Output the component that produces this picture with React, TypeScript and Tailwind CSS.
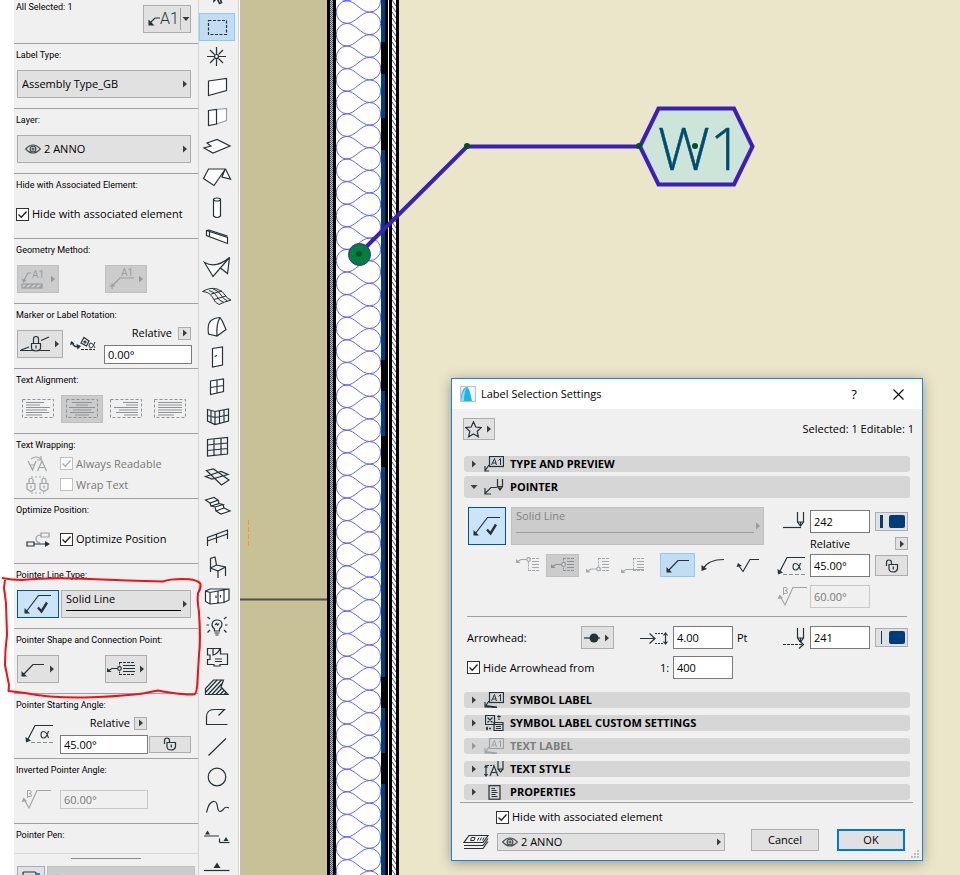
import type { ReactNode } from "react";
import clsx from "clsx";

const INK = "#263238";

type IconProps = {
  w: number;
  h: number;
  children: ReactNode;
  className?: string;
  color?: string;
};

function Icon({ w, h, children, className, color = INK }: IconProps) {
  return (
    <svg
      width={w}
      height={h}
      viewBox={`0 0 ${w} ${h}`}
      fill="none"
      stroke={color}
      strokeWidth="1.2"
      className={clsx("shrink-0", className)}
      aria-hidden="true"
    >
      {children}
    </svg>
  );
}

function Caret({ down, color = "#3c3c3c" }: { down?: boolean; color?: string }) {
  return (
    <svg width="8" height="8" viewBox="0 0 8 8" className="shrink-0" aria-hidden="true">
      <path d={down ? "M0.5 2H7.5L4 6Z" : "M2 0.5V7.5L6 4Z"} fill={color} />
    </svg>
  );
}

/* ---------- shared icons ---------- */

function EyeIcon() {
  return (
    <Icon w={16} h={10} color="#4a4f52">
      <path d="M0.7 5Q8 -3 15.3 5Q8 13 0.7 5Z" />
      <circle cx="8" cy="5" r="2.9" />
      <circle cx="8" cy="5" r="1" />
    </Icon>
  );
}

function LineCheckIcon() {
  return (
    <Icon w={30} h={22}>
      <path d="M3 19L15.500 2.500H28" />
      <path d="M1.500 15V20.500H7Z" fill={INK} stroke="none" />
      <path d="M15 14.500L18.500 18.500L24 9.500" strokeWidth="2.4" />
    </Icon>
  );
}

function BentLeaderIcon() {
  return (
    <Icon w={24} h={15}>
      <path d="M2 13L12 2.500H23" />
      <path d="M0.500 9V14.500H6Z" fill={INK} stroke="none" />
    </Icon>
  );
}

function AlphaIcon() {
  return (
    <Icon w={28} h={20}>
      <path d="M2 17L10 1.500H28" />
      <path d="M0.500 13L1 18.500L6 16.500Z" fill={INK} stroke="none" />
      <path d="M6 18.500H28" stroke="#8a8f92" strokeDasharray="4 2" strokeWidth="1" />
      <path d="M23.500 7Q21.500 14 18.500 14Q16 14 16 10.500Q16 7.500 18.500 7.500Q21.500 7.500 23.500 14" strokeWidth="1.100" />
    </Icon>
  );
}

function BetaIcon() {
  return (
    <Icon w={30} h={21} color="#a2a5a7">
      <path d="M3 10L8 19L16 1.500H30" />
      <path d="M0.500 13L2.500 8.500L6 12Z" fill="#a2a5a7" stroke="none" />
      <path d="M6.500 9V1.500H9Q11 2 10 4L8 4.500Q11 5 10.500 7Q9.500 8 7 7.500" strokeWidth="1" />
    </Icon>
  );
}

function UnlockIcon() {
  return (
    <Icon w={14} h={14}>
      <path d="M1.500 7V4Q1.500 1 4 1Q6.500 1 6.500 4V5.500" />
      <path d="M4 5.500H12.500V10Q11.500 13 8.300 13Q4.500 13 4 10Z" />
      <path d="M8.300 7.500V10.500" />
    </Icon>
  );
}

function AnchorIcon({ variant, color = INK, width = 28 }: { variant: number; color?: string; width?: number }) {
  const y = [2.5, 7.5, 12, 12.5][variant];
  return (
    <Icon w={width} h={16} color={color}>
      <path d={`M12 1.500H${width}M12 13.500H${width}`} strokeDasharray="3 1" strokeWidth="1" />
      <path d="M12.500 1.500V13.500" strokeDasharray="2 1" strokeWidth="1" />
      <path d={`M16 4.500H${width}M16 7.500H${width}M16 10.500H${width}`} strokeWidth="1" />
      <path d={`M1 ${y + 2.5}L5 ${y}H${variant === 3 ? width : 11}`} />
      <path d={`M0 ${y - 0.5}V${y + 3.5}H4.500Z`} fill={color} stroke="none" />
      {variant !== 3 && <circle cx="12.500" cy={y} r="1.800" fill="#eee" />}
    </Icon>
  );
}

/* ---------- form controls ---------- */

function Check({ label, checked, disabled }: { label: string; checked?: boolean; disabled?: boolean }) {
  return (
    <label className={clsx("flex items-center gap-[3px]", disabled && "text-[#787878]")}>
      <span className="relative h-[13px] w-[13px]">
        <input
          type="checkbox"
          defaultChecked={checked}
          disabled={disabled}
          className={clsx(
            "block h-[13px] w-[13px] appearance-none border bg-white",
            disabled ? "border-[#c0c0c0]" : "border-[#333]"
          )}
        />
        {checked && (
          <svg viewBox="0 0 13 13" className="pointer-events-none absolute inset-0" aria-hidden="true">
            <path d="M2.500 6.500L5.300 9.300L10.500 3.500" fill="none" stroke={disabled ? "#aaa" : "#222"} strokeWidth="1.300" />
          </svg>
        )}
      </span>
      <span className="whitespace-nowrap">{label}</span>
    </label>
  );
}

type FieldProps = { label: string; value: string; disabled?: boolean; className: string };

function Field({ label, value, disabled, className }: FieldProps) {
  return (
    <input
      aria-label={label}
      defaultValue={value}
      disabled={disabled}
      className={clsx(
        "border px-[3px]",
        disabled ? "border-[#c8c8c8] bg-[#f0f0f0] text-[#787878]" : "border-[#7a7a7a] bg-white",
        className
      )}
    />
  );
}

type ToolButtonProps = {
  label: string;
  children?: ReactNode;
  caret?: boolean;
  disabled?: boolean;
  active?: boolean;
  className: string;
};

function ToolButton({ label, children, caret, disabled, active, className }: ToolButtonProps) {
  return (
    <button
      aria-label={label}
      disabled={disabled}
      className={clsx(
        "flex shrink-0 items-center justify-center gap-[3px] border",
        active && "border-[#005499] bg-[#cce4f7]",
        disabled && "border-[#bfbfbf] bg-[#ccc]",
        !active && !disabled && "border-[#adadad] bg-[#e1e1e1]",
        className
      )}
    >
      {children}
      {caret && <Caret color={disabled ? "#999" : undefined} />}
    </button>
  );
}

function Dropdown({ label, value, icon, className }: { label: string; value: string; icon?: ReactNode; className: string }) {
  return (
    <div className={clsx("flex items-center gap-[3px] border border-[#adadad] bg-[#e1e1e1] pr-px pl-[4px]", className)}>
      {icon}
      <select aria-label={label} className="h-4 min-w-0 flex-1 appearance-none bg-transparent leading-4">
        <option>{value}</option>
      </select>
      <Caret />
    </div>
  );
}

function LineTypeSelect({ disabled, className }: { disabled?: boolean; className: string }) {
  return (
    <div
      className={clsx(
        "flex items-center border pr-px pl-1",
        disabled ? "border-[#bfbfbf] bg-[#ccc]" : "border-[#adadad] bg-[#e1e1e1]",
        className
      )}
    >
      <div className="flex h-full min-w-0 flex-1 flex-col">
        <select
          aria-label="Line type"
          disabled={disabled}
          className={clsx("h-4 w-full appearance-none bg-transparent leading-4 opacity-100", disabled && "text-[#838383]")}
        >
          <option>Solid Line</option>
        </select>
        <div className={clsx("border-b", disabled ? "mt-2 border-[#9c9c9c]" : "mt-[3px] border-black")} />
      </div>
      <Caret color={disabled ? "#9a9a9a" : undefined} />
    </div>
  );
}

/* ---------- info box ---------- */

function Section({ title, children }: { title: string; children?: ReactNode }) {
  return (
    <section className="h-[65px] shrink-0 border-b border-[#a0a0a0] pr-[7px] pl-[3px]">
      <h3 className="-ml-px h-5 font-[Roboto,sans-serif] text-[9px] leading-[22px] whitespace-nowrap">{title}</h3>
      <div className="flex h-10 items-center">{children}</div>
    </section>
  );
}

function AlignIcon({ lines }: { lines: number[][] }) {
  return (
    <Icon w={32} h={20} color="#8e9194">
      <rect x="0.500" y="0.500" width="31" height="18" strokeDasharray="3 2" strokeWidth="1" />
      {lines.map(([a, b], i) => (
        <path key={i} d={`M${a} ${3.5 + i * 2.5}H${b}`} strokeWidth="1" />
      ))}
    </Icon>
  );
}

const ALIGNMENTS = [
  { name: "Left", lines: [[4, 22], [4, 18], [4, 28], [4, 25], [4, 27], [4, 20]] },
  { name: "Center", lines: [[6, 26], [10, 22], [3, 29], [7, 25], [4, 28], [9, 23]] },
  { name: "Right", lines: [[13, 28], [16, 28], [4, 28], [9, 28], [6, 28], [14, 28]] },
  { name: "Justify", lines: [[4, 28], [4, 28], [4, 28], [4, 28], [4, 28], [4, 20]] },
];

function InfoBox() {
  return (
    <aside className="ml-[14px] flex w-[184px] shrink-0 flex-col bg-[#f0f0f0]">
      <div className="flex h-[44px] shrink-0 justify-between border-b border-[#a0a0a0] pr-[7px] pl-[2px]">
        <span className="font-[Roboto,sans-serif] text-[9px] leading-[14px]">All Selected: 1</span>
        <button aria-label="Label tool" className="mt-[5px] flex h-7 w-12 items-center border border-[#adadad] bg-[#e1e1e1] pl-[4px]">
          <Icon w={12} h={13}>
            <path d="M2 10L7 5H12" />
            <path d="M0.500 6.500V12.500H6.500Z" fill={INK} stroke="none" />
          </Icon>
          <span className="font-[Roboto] text-[16px] leading-none font-light text-[#263238]">A1</span>
          <span className="mx-px h-[22px] border-l border-[#a0a0a0]" />
          <Caret down />
        </button>
      </div>

      <Section title="Label Type:">
        <Dropdown label="Label type" value="Assembly Type_GB" className="h-7 w-[174px]" />
      </Section>
      <Section title="Layer:">
        <Dropdown label="Layer" value="2 ANNO" icon={<span className="ml-[3px]"><EyeIcon /></span>} className="h-7 w-[174px]" />
      </Section>
      <Section title="Hide with Associated Element:">
        <div className="-ml-px">
          <Check label="Hide with associated element" checked />
        </div>
      </Section>

      <Section title="Geometry Method:">
        <ToolButton label="Attach to element" disabled caret className="h-7 w-[42px]">
          <Icon w={26} h={22} color="#999c9e">
            <path d="M4 12L8 5H11" />
            <path d="M1.500 11L6.500 12L3.500 15Z" fill="#999c9e" stroke="none" />
            <text x="12" y="10" fontSize="10" fontFamily="Roboto" fill="#999c9e" stroke="none">A1</text>
            <rect x="2" y="16" width="20" height="4" />
            <path d="M4 20L8 16M9 20L13 16M14 20L18 16M19 20L22 17" />
          </Icon>
        </ToolButton>
        <ToolButton label="Independent label" disabled caret className="ml-[46px] h-7 w-[42px]">
          <Icon w={26} h={22} color="#999c9e">
            <path d="M4 18L12 10H26M1.500 18H7M4 15.500V21" />
            <text x="13" y="8" fontSize="10" fontFamily="Roboto" fill="#999c9e" stroke="none">A1</text>
          </Icon>
        </ToolButton>
      </Section>

      <Section title="Marker or Label Rotation:">
        <ToolButton label="Rotation lock" caret className="h-7 w-[46px]">
          <Icon w={30} h={18}>
            <path d="M0 15.500H30M1 15L9 12M21 5.500L29 2" />
            <path d="M11.500 8.500H20.500V13Q20.500 15.500 16 16Q11.500 15.500 11.500 13Z" fill="#e1e1e1" />
            <path d="M13.500 8.500V4Q13.500 1.500 16 1.500Q18.500 1.500 18.500 4V8.500M16 10.500V13.500" />
          </Icon>
        </ToolButton>
        <Icon w={26} h={16} className="ml-[7px]">
          <path d="M2 6Q4 12 9 10.500" strokeWidth="1.300" />
          <path d="M0 9L1 5L4.500 7.500ZM6.500 8L11 10L7.500 13.500Z" fill={INK} stroke="none" />
          <path d="M14 1.500L19 5L16.500 10L11 7Z" />
          <path d="M11 13.500H25" strokeWidth="1" strokeDasharray="3 1" />
          <circle cx="15" cy="6" r="1" />
          <path d="M25 6Q23 12 21 12Q19 12 19 9.500Q19 7 21 7Q23 7 25 12" strokeWidth="1" />
        </Icon>
        <div className="-mr-px ml-auto flex w-[88px] flex-col gap-[5px] pt-[2px]">
          <div className="flex h-[13px] items-center justify-end gap-[6px] pr-px">
            <span>Relative</span>
            <ToolButton label="Relative rotation" caret className="h-[13px] w-[13px]" />
          </div>
          <Field label="Rotation angle" value="0.00°" className="h-[19px] w-full" />
        </div>
      </Section>

      <Section title="Text Alignment:">
        {ALIGNMENTS.map(({ name, lines }, i) => (
          <button
            key={name}
            disabled
            aria-label={`${name} align`}
            className={clsx(
              "mr-[2px] flex h-7 w-[42px] shrink-0 items-center justify-center border",
              i === 1 ? "border-[#bfbfbf] bg-[#ccc]" : "border-transparent"
            )}
          >
            <AlignIcon lines={lines} />
          </button>
        ))}
      </Section>

      <Section title="Text Wrapping:">
        <div className="ml-[9px] flex flex-col gap-[3px]">
          <div className="flex h-[18px] items-center gap-[11px]">
            <Icon w={23} h={16} color="#a0a3a5">
              <path d="M2 5L6.500 14L10 5M4 9H8.500M11.500 15L16 5L20.500 15M13 11.500H19M5 3Q10 -1 15 3M15 0V4H11" />
            </Icon>
            <Check label="Always Readable" checked disabled />
          </div>
          <div className="flex h-[18px] items-center gap-[11px]">
            <Icon w={23} h={18} color="#a0a3a5">
              <path d="M1 7.500H9V13L5 15.500L1 13ZM3 7.500V3.500Q5 1 7 3.500V7.500M5 9.500V12.500M14 7.500H22V13L18 15.500L14 13ZM16 7.500V3.500Q18 1 20 3.500V7.500M18 9.500V12.500" />
              <path d="M5 1H18M5 17H18" strokeDasharray="2 2" />
            </Icon>
            <Check label="Wrap Text" disabled />
          </div>
        </div>
      </Section>

      <Section title="Optimize Position:">
        <div className="ml-[9px] flex items-center gap-[10px]">
          <Icon w={24} h={15}>
            <path d="M15 1H23V5H15ZM15 3Q10 3 10 7Q10 10 14 11" stroke="#9a9da0" />
            <path d="M1 10H8V14H1ZM8 12H20" />
            <path d="M19 9L24 12L19 15Z" fill={INK} stroke="none" />
          </Icon>
          <Check label="Optimize Position" checked />
        </div>
      </Section>

      <Section title="Pointer Line Type:">
        <ToolButton label="Show pointer" active className="h-7 w-[42px]">
          <LineCheckIcon />
        </ToolButton>
        <LineTypeSelect className="ml-[2px] h-7 w-[130px]" />
      </Section>

      <Section title="Pointer Shape and Connection Point:">
        <ToolButton label="Pointer shape" caret className="h-7 w-[42px]">
          <BentLeaderIcon />
        </ToolButton>
        <ToolButton label="Connection point" caret className="ml-[46px] h-7 w-[42px]">
          <AnchorIcon variant={1} />
        </ToolButton>
      </Section>

      <Section title="Pointer Starting Angle:">
        <div className="ml-[8px]">
          <AlphaIcon />
        </div>
        <div className="ml-auto flex w-[131px] flex-col gap-[5px] pt-[2px]">
          <div className="flex h-[13px] w-[87px] items-center justify-end gap-[4px]">
            <span>Relative</span>
            <ToolButton label="Relative starting angle" caret className="h-[13px] w-[13px]" />
          </div>
          <div className="flex items-center gap-px">
            <Field label="Pointer starting angle" value="45.00°" className="h-[19px] w-[88px]" />
            <ToolButton label="Unlock angle" className="h-[17px] w-[42px]">
              <UnlockIcon />
            </ToolButton>
          </div>
        </div>
      </Section>

      <Section title="Inverted Pointer Angle:">
        <div className="ml-[4px]">
          <BetaIcon />
        </div>
        <Field label="Inverted pointer angle" value="60.00°" disabled className="ml-[9px] h-[19px] w-[88px]" />
      </Section>

      <div className="h-[30px] shrink-0 border-b border-[#d9d9d9] pl-[2px] font-[Roboto,sans-serif] text-[9px] leading-[22px]">
        Pointer Pen:
      </div>
      <div className="mx-auto mt-1 w-[70px] shrink-0 border-b border-[#8a8a8a]" />
      <div className="mt-[7px] flex shrink-0 gap-[2px] pr-[3px] pl-[3px]">
        <ToolButton label="Pen settings" className="h-7 w-7">
          <Icon w={18} h={18}>
            <rect x="1" y="1" width="13" height="16" rx="1" />
            <path d="M3 4.500H12" />
            <path d="M14 3H18" stroke="#2b7de1" strokeWidth="2" />
          </Icon>
        </ToolButton>
        <button aria-label="Pen" disabled className="flex h-7 flex-1 items-start border border-[#bfbfbf] bg-[#ccc] pt-[7px] pl-[5px]">
          <Icon w={10} h={10} color="#8fa9dc">
            <circle cx="5" cy="5" r="4" fill="#b9c9ea" />
          </Icon>
        </button>
      </div>
    </aside>
  );
}

/* ---------- toolbox ---------- */

const TOOLS: { name: string; art: ReactNode }[] = [
  {
    name: "Arrow",
    art: <path d="M12 6V19L15 16L17.500 21.500L19.500 20.500L17.500 15.500H21Z" strokeWidth="1.600" />,
  },
  { name: "Marquee", art: <rect x="6.500" y="8.500" width="18" height="14" strokeDasharray="3 1.500" /> },
  {
    name: "Hotspot",
    art: (
      <>
        <path d="M14.500 5V12M14.500 17V24M5 14.500H12M17 14.500H24M8 8L12.500 12.500M16.500 16.500L21 21M21 8L16.500 12.500M12.500 16.500L8 21" />
        <circle cx="14.500" cy="14.500" r="2" />
      </>
    ),
  },
  { name: "Wall", art: <path d="M6.500 9L24.500 6.500V18.500L6.500 23.500Z" fill="#fff" /> },
  {
    name: "Curtain Panel",
    art: (
      <>
        <path d="M14.500 7.500L24.500 6.500V18.500L14.500 22" stroke="#9a9da0" fill="#fff" />
        <path d="M6.500 8.500L14.500 7.500V22L6.500 23.500Z" fill="#fff" />
      </>
    ),
  },
  { name: "Slab", art: <path d="M5 11L15 7.500L28 14L11 21L2 16L9 14Z" fill="#fff" /> },
  { name: "Roof", art: <path d="M6.500 7H23.500L28.500 17L20 15L23 7.500L12 23.500L1.500 16.500Z" fill="#fff" /> },
  {
    name: "Column",
    art: (
      <>
        <path d="M11.500 7.500V24Q15 27 18.500 24V7.500" fill="#fff" />
        <ellipse cx="15" cy="7.500" rx="3.500" ry="1.500" />
      </>
    ),
  },
  { name: "Beam", art: <path d="M4.500 8.500L25.500 15.500V21.500L4.500 13.500ZM4.500 8.500L7 8L25.500 14M7.500 9.500V14" fill="#fff" /> },
  { name: "Mesh", art: <path d="M2.500 10.500Q14 17 27.500 5.500L11 24.500ZM27.500 5.500L25.500 21.500L18.500 16" fill="#fff" /> },
  {
    name: "Shell",
    art: (
      <path
        d="M0.500 9.500Q8 5 15 7Q21 9 23 13Q25 17 29 18Q22 20 17 22.500Q13 21 11 16Q8 10 0.500 9.500ZM7 8.500Q13 10 15 14.500Q17 19 22 20.500M11 7Q17 9 19 13Q21 17 25.500 19M9 12L20 9M12 17.500L24 14"
        strokeWidth="1"
      />
    ),
  },
  { name: "Morph", art: <path d="M6.500 22Q5 12 9 8.500Q13 5.500 18 5.500L20.500 9.500L24 17.500L15 24ZM18 5.500Q14 12 15 24" fill="#fff" /> },
  { name: "Door", art: <path d="M10.500 6.500L20.500 5V23L10.500 25ZM12.500 14.500L15 13.500" fill="#fff" /> },
  { name: "Window", art: <path d="M8.500 9L21.500 7V19.500L8.500 22.500ZM15 8V21M8.500 15.500L21.500 13.500" fill="#fff" /> },
  {
    name: "Curtain Wall",
    art: <path d="M5.500 7.500L13 9.500L26.500 7V19L13 22.500L5.500 19ZM13 9.500V22.500M9 8.500V20.500M17.500 8.500V21M22 8V20M5.500 13.500L13 15.500L26.500 13" />,
  },
  {
    name: "Skylight",
    art: <path d="M5.500 7.500L25.500 5.500V22L5.500 24ZM12 7V23.500M19 6V22.500M5.500 13L25.500 11M5.500 18.500L25.500 16.500" />,
  },
  { name: "Ramp", art: <path d="M4.500 8.500L11.500 7L27 18L19.500 23ZM3.500 14.500L19 9.500L26 12.500L10 17Z" /> },
  {
    name: "Stair",
    art: (
      <path
        d="M3.500 8L12 5.500L16 8L8 11L3.500 8ZM8 11L9 14L17 11.500L16 8M9 14L13 15L21 12.500L17 11.500M13 15L14 19L22 16L21 12.500M14 19L19 22L28 19L22 16"
        fill="#fff"
      />
    ),
  },
  { name: "Railing", art: <path d="M5.500 24V15.500L25.500 8V17M5.500 19L25.500 12M14.500 12V21" /> },
  { name: "Object", art: <path d="M8.500 20V6.500L13 5L14.500 13L23.500 15V24M8.500 16L14.500 13M8.500 16L16 19L23.500 15M16 19V26" /> },
  {
    name: "Zone Cabinet",
    art: <path d="M3.500 9L8 7H27V18L22 20.500L8 22L3.500 19.500ZM3.500 9L8 10.500L27 7M8 10.500V22M16 9.500V21M22 8.500V20.500M14 13.500V16M18.500 13V15.500" fill="#fff" />,
  },
  {
    name: "Lamp",
    art: (
      <>
        <path d="M12.500 19V17Q9.500 14.500 10 12Q11 8 15 8Q19.500 8 20 12Q20 15 17.500 17V19ZM12.500 21H17.500M13.500 23H16.500M13 13L14.500 11.500L15.500 13L17 11.500" />
        <path d="M8 7L5.500 5M22 7L24.500 5M7 13H4.500M23 13H25.500M8 18L5.500 20.500M22 18L24.500 20.500" />
      </>
    ),
  },
  {
    name: "Zone",
    art: <path d="M5.500 6.500H18.500V12H25.500V22.500H18V24H12V22.500H5.500V17.500H8V13H5.500ZM11 6.500V13Q16 12 18 6.500M13 17H20M13 19.500H20" />,
  },
  {
    name: "Fill",
    art: (
      <>
        <path d="M11.500 8H21.500L19 15L26 22.500H3.500V16.500Z" />
        <path d="M4 20L15 8M6 22.500L19.500 8M10 22.500L20 11.500M14 22.500L20 16M18 22.500L22 18.500M22 22.500L24 20.500" strokeWidth="1.300" />
      </>
    ),
  },
  { name: "Polyline", art: <path d="M25.500 22.500H4.500V14.500Q5 7.500 12 7.500H22.500L16.500 13.500" /> },
  { name: "Line", art: <path d="M6.500 23.500L24 6.500" /> },
  { name: "Circle", art: <circle cx="15" cy="15" r="8.800" /> },
  { name: "Spline", art: <path d="M4.500 20.500C6 14 9 9 12.500 9.500C17 10 14 19 18 19.500C22 20 21 13 27 16" /> },
  {
    name: "Section",
    art: (
      <>
        <path d="M2 14H17.500V20.500" strokeDasharray="15 3 4" />
        <path d="M17.500 20.500H27.500" />
        <path d="M3 12.500L5.500 8.500L8 12.500ZM21.500 19L24 15L26.500 19Z" fill={INK} stroke="none" />
      </>
    ),
  },
  {
    name: "Elevation",
    art: (
      <>
        <path d="M2 18.500H27.500" />
        <path d="M11.500 16L15 10.500L18.500 16Z" fill={INK} stroke="none" />
      </>
    ),
  },
];

function Toolbox() {
  return (
    <nav className="flex w-[41px] shrink-0 flex-col border-x border-[#d4d4d4] bg-[#f0f0f0] pr-[3px]">
      <div className="-mt-[18px] flex flex-col">
        {TOOLS.map(({ name, art }) => {
          const active = name === "Marquee";
          return (
            <button
              key={name}
              aria-label={name}
              className={clsx(
                "flex shrink-0 items-center justify-center border",
                active ? "my-px h-7 border-[#90c8f6] bg-[#c2ddf2]" : "h-[30px] border-transparent"
              )}
            >
              <Icon w={30} h={30}>{art}</Icon>
            </button>
          );
        })}
      </div>
    </nav>
  );
}

/* ---------- drawing ---------- */

const PERIOD = 22.6;
const INSULATION = Array.from({ length: 41 }, (_, i) => {
  const y = 23.4 + (i - 2) * PERIOD;
  const half = PERIOD / 2;
  return `M347 ${y}C355 ${y} 361 ${y - half} 369.500 ${y - half}A11.200 ${half} 0 0 1 369.500 ${y + half}C361 ${y + half} 355 ${y} 347 ${y}A10.700 ${half} 0 0 0 347 ${y + PERIOD}`;
}).join("");

const STUDS = [[42, 32], [118, 32], [360, 31], [436, 31], [677, 31], [753, 31]];

function Drawing() {
  return (
    <svg width="720" height="875" viewBox="240 0 720 875" className="absolute top-0 left-0" aria-label="Wall section with label">
      <defs>
        <pattern id="gypsum" width="2" height="2" patternUnits="userSpaceOnUse">
          <rect width="2" height="2" fill="#b4b4c8" />
          <rect width="1" height="1" fill="#55556e" />
          <rect x="1" y="1" width="1" height="1" fill="#55556e" />
        </pattern>
        <pattern id="cladding" x="392" width="4" height="6" patternUnits="userSpaceOnUse">
          <rect width="4" height="6" fill="#fff" />
          <path d="M0 0L4 6" stroke="#50506e" strokeWidth="1" />
        </pattern>
      </defs>
      <rect x="240" y="0" width="87" height="875" fill="#c8c197" />
      <path d="M240 599.500H327" stroke="#4f4f4c" strokeWidth="2" />
      <path d="M248.500 520V546" stroke="#f79432" strokeDasharray="5 2" />

      <rect x="327" y="0" width="72" height="875" fill="#000" />
      <rect x="330" y="0" width="3" height="875" fill="url(#gypsum)" />
      <rect x="336" y="0" width="45" height="875" fill="#fff" />
      <path d={INSULATION} fill="none" stroke="#6060ff" strokeWidth="1" />
      <rect x="381" y="0" width="4" height="875" fill="#003f7d" />
      {STUDS.map(([y, h]) => (
        <rect key={y} x="381" y={y} width="4" height={h} fill="#080800" />
      ))}
      <rect x="388" y="0" width="1" height="875" fill="#fff" />
      <rect x="392" y="0" width="4" height="875" fill="url(#cladding)" />

      <path d="M359 254L467 146.500H640" fill="none" stroke="#3b1fb8" strokeWidth="4" />
      <path d="M640 146.500L658.500 108.500H734L752.500 146.500L734 184.500H658.500Z" fill="#cde5d8" stroke="#3b1fb8" strokeWidth="4" />
      <text x="658" y="170" fontFamily="Open Sans, sans-serif" fontWeight="300" fontSize="58" fill="#004c70" stroke="#004c70" strokeWidth="0.500">
        W1
      </text>
      <circle cx="467" cy="146" r="3" fill="#00502a" />
      <circle cx="639" cy="146" r="3" fill="#00502a" />
      <circle cx="695" cy="146" r="3" fill="#00502a" />
      <circle cx="359.500" cy="254.500" r="11" fill="#008040" stroke="#4a2a8c" />
      <circle cx="359" cy="254" r="3" fill="#00502a" />
    </svg>
  );
}

/* ---------- dialog ---------- */

function PanelHeader({ title, icon, open, disabled }: { title: string; icon: ReactNode; open?: boolean; disabled?: boolean }) {
  return (
    <button
      disabled={disabled}
      aria-expanded={!!open}
      className={clsx(
        "flex w-full items-center rounded-[3px] bg-[#d6d6d6] pl-[6px] text-left leading-4 font-bold",
        open ? "h-[22px]" : "h-4",
        disabled && "text-[#7d7d7d]"
      )}
    >
      <Caret down={open} color={disabled ? "#999" : undefined} />
      <span className="ml-[6px] flex w-5 justify-center">{icon}</span>
      <span className="ml-[6px]">{title}</span>
    </button>
  );
}

function LabelIcon({ symbol, color = INK }: { symbol?: boolean; color?: string }) {
  return (
    <Icon w={20} h={16} color={color}>
      <rect x="5.500" y="0.500" width="14" height="10" />
      <path d="M7.500 9L10.500 2.500L12.500 9M8.500 7H12M14.500 4.500L16.500 2.500V9" strokeWidth="1" />
      <path d="M5 9L1.500 14M1 10V15H5" />
      {symbol && <path d="M2 14L13 15.500" strokeWidth="2" />}
    </Icon>
  );
}

function PenTip({ arrow }: { arrow?: boolean }) {
  return (
    <Icon w={22} h={22}>
      <path d="M14.500 1V11L17.500 15L20.500 11V1M15 11H20M17.500 11V15" />
      {arrow ? <path d="M0 17.500H20" strokeDasharray="3 1" /> : <path d="M0 16.500H18" />}
      {arrow && <path d="M16 13.500L20.500 17.500L16 21.500" />}
    </Icon>
  );
}

function PenSwatch({ label, thin }: { label: string; thin?: boolean }) {
  return (
    <ToolButton label={label} className="h-[19px] w-[33px]">
      <Icon w={26} h={13}>
        <rect x={thin ? 2 : 1} y="0" width={thin ? 1 : 3} height="13" fill="#003c78" stroke="none" />
        <rect x="10" y="0" width="16" height="13" rx="2" fill="#003c78" stroke="none" />
      </Icon>
    </ToolButton>
  );
}

function LabelDialog() {
  return (
    <div
      role="dialog"
      aria-label="Label Selection Settings"
      className="absolute top-[378px] left-[211px] w-[472px] border border-[#1883d7] bg-[#f0f0f0] shadow-[0_2px_12px_rgba(0,0,0,0.35)]"
    >
      <header className="flex h-[30px] items-center bg-white pr-4 pl-2">
        <Icon w={16} h={16}>
          <rect x="0.500" y="0.500" width="15" height="15" rx="1" fill="#f2f7f9" stroke="#b9c4ca" />
          <path d="M1 15V10Q3 1 7 1Q9 1 12 15Z" fill="#19b5e8" stroke="none" />
          <path d="M1 15Q2 5 7 1Q4 6 4 15Z" fill="#8fdcf2" stroke="none" />
        </Icon>
        <h2 className="ml-[5px] flex-1">Label Selection Settings</h2>
        <button aria-label="Help" className="w-6 text-center text-[13px]">
          ?
        </button>
        <button aria-label="Close" className="ml-6 flex w-[16px] justify-center">
          <Icon w={11} h={11} color="#111">
            <path d="M0.500 0.500L10.500 10.500M10.500 0.500L0.500 10.500" />
          </Icon>
        </button>
      </header>

      <div className="px-3">
        <div className="-mx-px mt-[9px] flex items-center justify-between">
          <ToolButton label="Favorites" caret className="h-[22px] w-8">
            <Icon w={17} h={17}>
              <path d="M8.500 0.800L10.800 6L16.300 6.600L12.200 10.300L13.400 15.800L8.500 13L3.600 15.800L4.800 10.300L0.700 6.600L6.200 6Z" />
            </Icon>
          </ToolButton>
          <span className="-mr-[3px]">Selected: 1 Editable: 1</span>
        </div>

        <div className="mt-4 flex flex-col gap-1">
          <PanelHeader title="TYPE AND PREVIEW" icon={<LabelIcon />} />
          <PanelHeader
            title="POINTER"
            open
            icon={
              <Icon w={20} h={16}>
                <path d="M1 14.500L7 8.500H13M1 9V15H7" />
                <path d="M13.500 0V7.500L16 11L18.500 7.500V0M13.500 7.500H18.500M16 8V11" />
              </Icon>
            }
          />
        </div>

        <div className="flex gap-[13px] pt-[9px] pr-[2px] pl-1">
          <div className="flex flex-1 flex-col gap-2">
            <div className="flex gap-[5px]">
              <ToolButton label="Show pointer" active className="h-[38px] w-[38px]">
                <LineCheckIcon />
              </ToolButton>
              <LineTypeSelect disabled className="h-[38px] flex-1" />
            </div>
            <div className="ml-[48px] flex h-6 items-center">
              <button disabled aria-label="Connect top">
                <AnchorIcon variant={0} color="#a5a8aa" width={23} />
              </button>
              <ToolButton label="Connect middle" disabled className="ml-[7px] h-[23px] w-[33px]">
                <AnchorIcon variant={1} color="#8e9193" width={23} />
              </ToolButton>
              <button disabled aria-label="Connect bottom" className="ml-[7px]">
                <AnchorIcon variant={2} color="#a5a8aa" width={23} />
              </button>
              <button disabled aria-label="Connect underlined" className="ml-[12px]">
                <AnchorIcon variant={3} color="#a5a8aa" width={23} />
              </button>
              <button aria-label="Straight pointer" className="ml-[16px] flex h-6 w-[35px] items-center justify-center border border-[#90c8f6] bg-[#c2ddf2]">
                <BentLeaderIcon />
              </button>
              <button aria-label="Curved pointer" className="ml-[6px]">
                <Icon w={23} h={14}>
                  <path d="M2 11Q7 1.500 23 1.500" />
                  <path d="M0.500 7V13L6 11Z" fill={INK} stroke="none" />
                </Icon>
              </button>
              <button aria-label="Inverted pointer" className="ml-[12px]">
                <Icon w={23} h={16}>
                  <path d="M3 9L7 14.500L14 2.500H23" />
                  <path d="M0.500 10L2 6L6 9Z" fill={INK} stroke="none" />
                </Icon>
              </button>
            </div>
          </div>

          <div className="flex w-[131px] flex-col pt-[3px]">
            <div className="flex items-center justify-end gap-[5px]">
              <PenTip />
              <Field label="Pointer pen" value="242" className="h-[23px] w-[60px]" />
              <PenSwatch label="Pointer pen color" />
            </div>
            <div className="mt-1 flex h-[13px] items-center justify-between pl-[33px]">
              <span>Relative</span>
              <ToolButton label="Relative angle" caret className="h-[13px] w-[13px]" />
            </div>
            <div className="mt-1 flex items-center justify-end gap-[5px]">
              <AlphaIcon />
              <Field label="Starting angle" value="45.00°" className="h-[23px] w-[60px]" />
              <ToolButton label="Unlock angle" className="h-[21px] w-[33px]">
                <UnlockIcon />
              </ToolButton>
            </div>
            <div className="mt-2 flex items-center gap-[3px]">
              <BetaIcon />
              <Field label="Inverted angle" value="60.00°" disabled className="h-[23px] w-[60px]" />
            </div>
          </div>
        </div>

        <div className="mx-[3px] mt-2 border-t border-[#a0a0a0] pt-[9px]">
          <div className="-mr-px flex items-center">
            <span className="w-[114px]">Arrowhead:</span>
            <ToolButton label="Arrowhead shape" caret className="h-[23px] w-[33px]">
              <Icon w={16} h={12}>
                <path d="M0 6H16" />
                <circle cx="10" cy="6" r="4.500" fill={INK} stroke="none" />
              </Icon>
            </ToolButton>
            <Icon w={28} h={14} className="ml-[26px]">
              <path d="M0 7.500H15M9.500 2.500L15 7.500L9.500 12.500" />
              <path d="M15 2.500H23M15 12.500H23" strokeDasharray="2 1" />
              <path d="M25.500 3V12M23.500 4.500L25.500 2L27.500 4.500M23.500 10.500L25.500 13L27.500 10.500" />
            </Icon>
            <Field label="Arrowhead size" value="4.00" className="ml-[5px] h-[23px] w-[60px]" />
            <span className="ml-[4px]">Pt</span>
            <div className="ml-auto flex items-center gap-[5px]">
              <PenTip arrow />
              <Field label="Arrowhead pen" value="241" className="h-[23px] w-[60px]" />
              <PenSwatch label="Arrowhead pen color" thin />
            </div>
          </div>
          <div className="mt-[7px] flex items-center">
            <div className="w-[193px]">
              <Check label="Hide Arrowhead from" checked />
            </div>
            <span className="w-[13px]">1:</span>
            <Field label="Scale" value="400" className="h-[23px] w-[60px]" />
          </div>
        </div>

        <div className="mt-[13px] flex flex-col gap-[7px]">
          <PanelHeader title="SYMBOL LABEL" icon={<LabelIcon symbol />} />
          <PanelHeader
            title="SYMBOL LABEL CUSTOM SETTINGS"
            icon={
              <Icon w={19} h={16}>
                <path d="M0.500 0.500H9.500V9.500H0.500ZM2.500 2.500L7.500 7.500M7.500 2.500L2.500 7.500M9 7.500H18V15.500H9ZM9 9.500H18M11 11.500H16M11 13.500H16" />
                <path d="M14 0.500V5M12.500 2L14 0.500L15.500 2M1 13.500H6M2.500 12L1 13.500L2.500 15" strokeWidth="1.300" strokeDasharray="2 1" />
              </Icon>
            }
          />
          <PanelHeader title="TEXT LABEL" disabled icon={<LabelIcon symbol color="#a0a3a5" />} />
          <PanelHeader
            title="TEXT STYLE"
            icon={
              <Icon w={20} h={16}>
                <path d="M2 5V15M0.500 6.500L2 4.500L3.500 6.500M0.500 13L2 15L3.500 13M6 15L10 5L14 15M7.500 11.500H13M14 0V8L16.500 11L19 8V0M14 8H19" />
                <path d="M3 4.500H10" strokeDasharray="2 1" />
              </Icon>
            }
          />
          <PanelHeader
            title="PROPERTIES"
            icon={
              <Icon w={13} h={15}>
                <rect x="1" y="0.700" width="11" height="13.500" />
                <path d="M3.500 3.500H7M3.500 5.500H8.500M3.500 7.500H9.500M3.500 9.500H7.500M3.500 11.500H9.500" strokeWidth="1" />
              </Icon>
            }
          />
        </div>
      </div>

      <footer className="mr-[9px] ml-2 mt-[2px] flex items-end border-t border-[#a0a0a0] pt-[7px] pb-[9px]">
        <div className="flex flex-1 flex-col gap-[9px] pl-[3px]">
          <div className="ml-[33px] h-[14px]">
            <Check label="Hide with associated element" checked />
          </div>
          <div className="flex items-center gap-[8px]">
            <Icon w={26} h={15}>
              <path d="M6 0.500H25L20 7.500H1ZM1 10.500H20L25 3.500M1 13.500H20L25 6.500" />
              <path d="M8.500 2.500H12L11 5.500H7.500ZM16 2.500L14.500 5.500M18.500 2.500L17 5.500M21 2.500L19.500 5.500" strokeWidth="1" />
            </Icon>
            <Dropdown label="Dialog layer" value="2 ANNO" icon={<EyeIcon />} className="h-[18px] w-[228px]" />
          </div>
        </div>
        <button className="h-[22px] w-[68px] border border-[#adadad] bg-[#e1e1e1]">Cancel</button>
        <button className="mr-2 ml-[18px] h-[22px] w-[68px] border-2 border-[#0078d7] bg-[#e1e1e1]">OK</button>
      </footer>
      <svg width="8" height="8" viewBox="0 0 8 8" className="absolute right-[3px] bottom-[2px]" aria-hidden="true">
        <path d="M6 0H8V2H6ZM3 3H5V5H3ZM6 3H8V5H6ZM0 6H2V8H0ZM3 6H5V8H3ZM6 6H8V8H6Z" fill="#bdbdbd" />
      </svg>
    </div>
  );
}

function RedMarkup() {
  return (
    <svg width="210" height="130" viewBox="0 574 210 130" className="pointer-events-none absolute top-[574px] left-0" aria-hidden="true">
      <path
        d="M2 578Q12 580 22 580Q50 577 90 579L128 580.500L163 581.500Q170 579 182 579Q198 579 200.500 584Q201 589 198 593Q197 600 199 612Q201 640 199 655L197.500 680Q197 694 194 694.500H187Q170 693 158 690.500L140 694Q110 697 85 697.500Q50 698 25 693L8.500 691L9 685L5 665Q5 650 7 635L6 603Q5 595 4 588L5 580"
        fill="none"
        stroke="#f01018"
        strokeWidth="2"
        strokeLinejoin="round"
      />
    </svg>
  );
}

export default function App() {
  return (
    <div className="relative flex h-screen overflow-hidden bg-white font-['Open_Sans',sans-serif] text-[11px] leading-[14px] text-black">
      <InfoBox />
      <Toolbox />
      <main className="relative ml-px flex-1 overflow-hidden bg-[#ebe6ca]">
        <Drawing />
        <LabelDialog />
      </main>
      <RedMarkup />
    </div>
  );
}
